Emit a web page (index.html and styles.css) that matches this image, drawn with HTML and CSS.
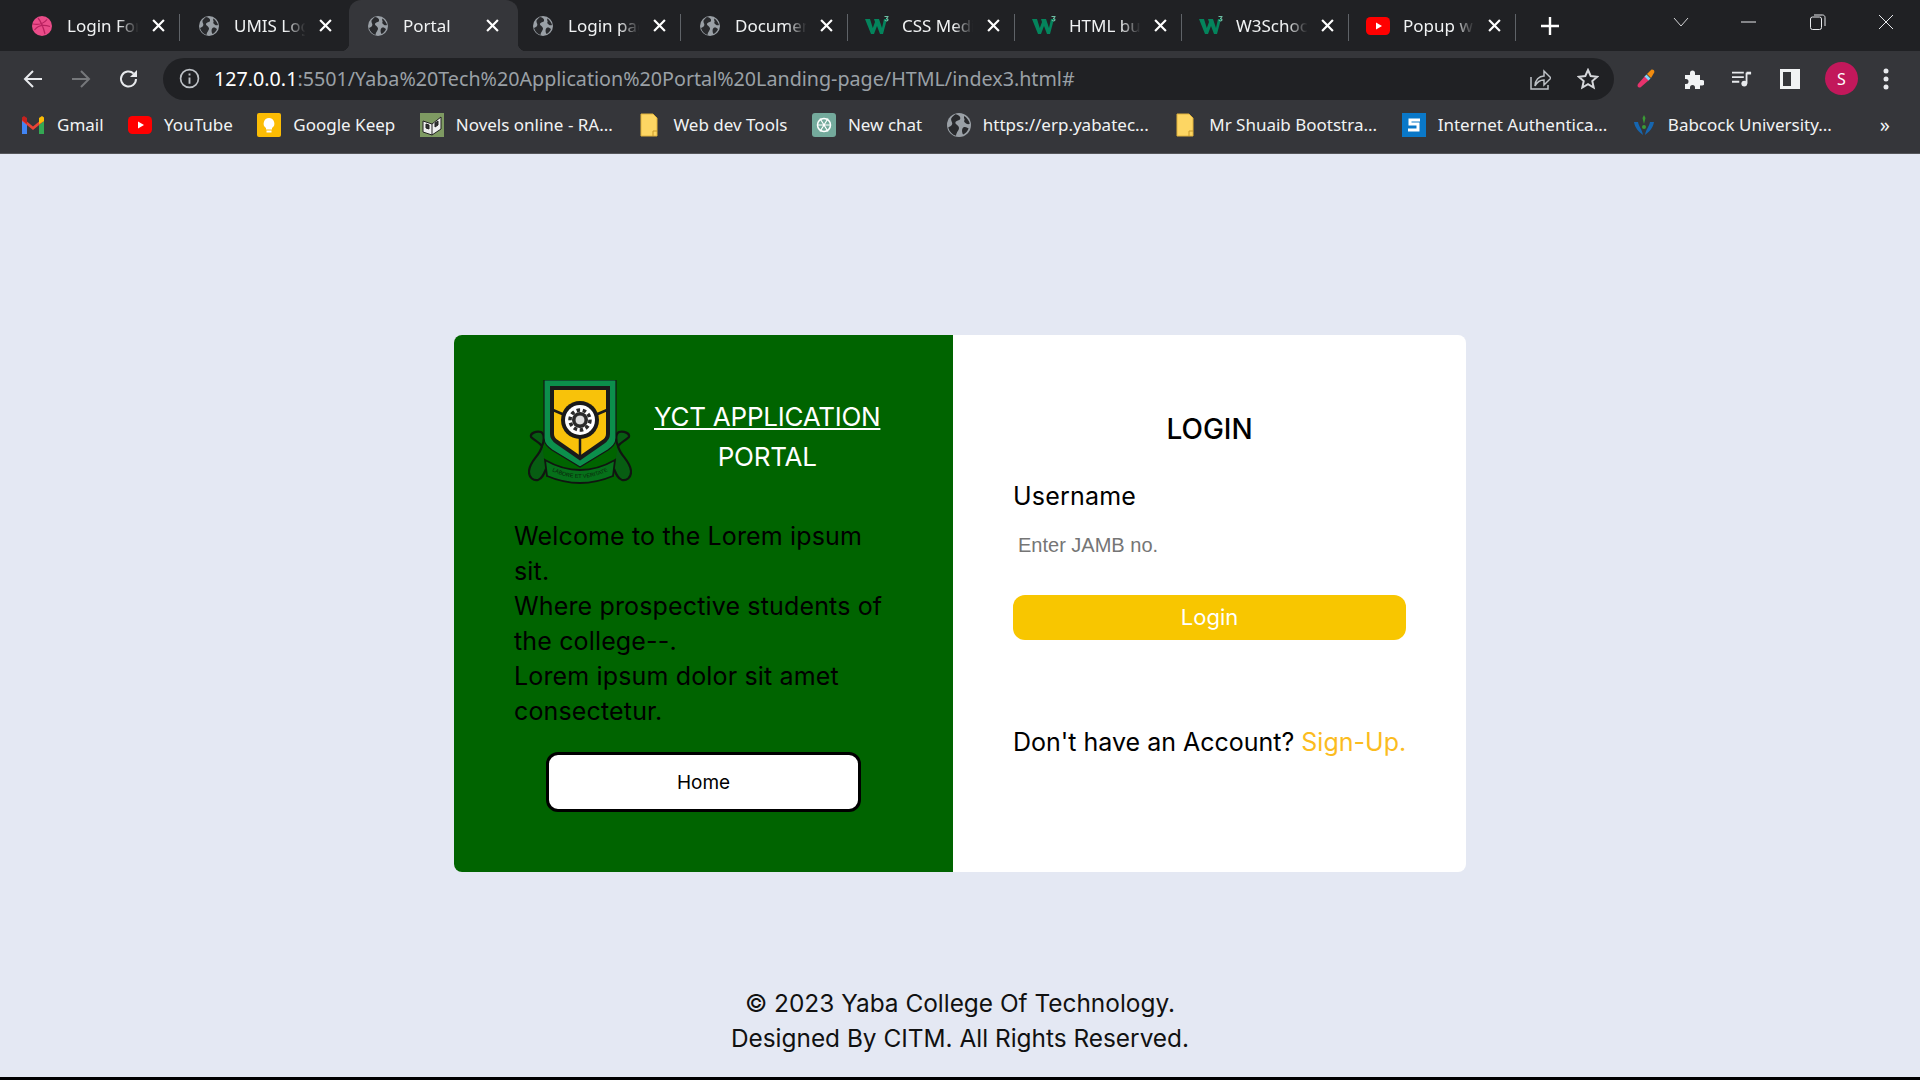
FILE: index.html
```html
<!DOCTYPE html>
<html lang="en">
<head>
  <meta charset="UTF-8">
  <meta name="viewport" content="width=device-width, initial-scale=1.0">
  <title>Portal</title>
  <link rel="stylesheet" href="styles.css">
</head>
<body>
<svg class="defs" width="0" height="0" aria-hidden="true">
  <symbol id="i-globe" viewBox="0 0 20 20">
    <circle cx="10" cy="10" r="10" fill="#9aa0a6"/>
    <path d="M7 1c3 .5 4.500 2 4 4-.5 1.500-3.500 1-4 3-.4 1.500 3 2.500 3 4.500 0 2-2 3-2.500 6.500-3-1-5.500-3.500-6.500-7 1.500-1 2.500-1 3.200-2.500C5 8 3 6.500 3.500 4.500 4.500 3 6 1.500 7 1z" fill="#292a2d"/>
    <path d="M14.500 2.500c2 1.500 4 4 4.500 6.500-2 1-3.500-.5-4.500-1.500-.8-1 .6-1.500 0-2.500-.3-.8-.6-1.700 0-2.500zM13.500 12c2-1 3 0 4.500 1-1 2.500-2.500 4-4.500 5-1-1.500-1.500-4.500 0-6z" fill="#292a2d"/>
  </symbol>
  <symbol id="i-w3" viewBox="0 0 24 20">
    <path d="M0 3h5l2.800 9L10 6l-1-3h5l3 9 2-9h3l-4 15h-3l-3-8-3 8H6z" fill="#04845c"/>
    <path d="M19.500 0h4v1l-1.300 1.200c.9.300 1.300.8 1.300 1.500 0 1-.8 1.700-2 1.700-.9 0-1.600-.3-2-.8l.6-.7c.3.300.8.500 1.300.5.500 0 .9-.2.900-.7 0-.5-.5-.7-1.300-.7v-.7l1.100-1.200h-2.600z" fill="#6fbfa4"/>
  </symbol>
  <symbol id="i-yt" viewBox="0 0 24 18">
    <rect width="24" height="18" rx="4.500" fill="#f00"/>
    <path d="M10 5.500l6 3.500-6 3.500z" fill="#fff"/>
  </symbol>
  <symbol id="i-folder" viewBox="0 0 18 24">
    <path d="M1 1h12l4 4v18H1z" fill="#fdd663" stroke="#e0b23c"/>
    <path d="M13 23v-5h4" fill="none" stroke="#c99a2c"/>
  </symbol>
  <symbol id="i-x" viewBox="0 0 12 12">
    <path d="M1 1l10 10M11 1L1 11" stroke="#fff" stroke-width="2" fill="none"/>
  </symbol>
</svg>

<div class="chrome">
  <div class="tabstrip">
    <div class="tab">
      <svg class="favicon" viewBox="0 0 20 20"><circle cx="10" cy="10" r="10" fill="#ea4c89"/><path d="M6 2c3 3.500 5 8 7 16M1 8c5 1 10 .5 14-4.500M2.500 14c3-4 8-6 15.500-3.500" fill="none" stroke="#b8215f" stroke-width="1.200"/></svg>
      <span class="tab-title">Login Form</span>
      <svg class="tab-close"><use href="#i-x"/></svg>
    </div>
    <div class="tab">
      <svg class="favicon"><use href="#i-globe"/></svg>
      <span class="tab-title">UMIS Login</span>
      <svg class="tab-close"><use href="#i-x"/></svg>
    </div>
    <div class="tab active">
      <svg class="favicon"><use href="#i-globe"/></svg>
      <span class="tab-title">Portal</span>
      <svg class="tab-close"><use href="#i-x"/></svg>
    </div>
    <div class="tab">
      <svg class="favicon"><use href="#i-globe"/></svg>
      <span class="tab-title">Login page</span>
      <svg class="tab-close"><use href="#i-x"/></svg>
    </div>
    <div class="tab">
      <svg class="favicon"><use href="#i-globe"/></svg>
      <span class="tab-title">Document</span>
      <svg class="tab-close"><use href="#i-x"/></svg>
    </div>
    <div class="tab">
      <svg class="favicon wide"><use href="#i-w3"/></svg>
      <span class="tab-title">CSS Media</span>
      <svg class="tab-close"><use href="#i-x"/></svg>
    </div>
    <div class="tab">
      <svg class="favicon wide"><use href="#i-w3"/></svg>
      <span class="tab-title">HTML button</span>
      <svg class="tab-close"><use href="#i-x"/></svg>
    </div>
    <div class="tab">
      <svg class="favicon wide"><use href="#i-w3"/></svg>
      <span class="tab-title">W3Schools</span>
      <svg class="tab-close"><use href="#i-x"/></svg>
    </div>
    <div class="tab">
      <svg class="favicon wide"><use href="#i-yt"/></svg>
      <span class="tab-title">Popup with</span>
      <svg class="tab-close"><use href="#i-x"/></svg>
    </div>
    <svg class="new-tab" viewBox="0 0 18 18"><path d="M9 0v18M0 9h18" stroke="#fff" stroke-width="2.400"/></svg>
    <div class="window-controls">
      <svg viewBox="0 0 16 10" class="win-chevron"><path d="M1 1l7 8 7-8" fill="none" stroke="#d5d6d8" stroke-width="1"/></svg>
      <svg viewBox="0 0 16 16" class="win-btn"><path d="M0 8h15" stroke="#e8eaed" stroke-width="1"/></svg>
      <svg viewBox="0 0 16 16" class="win-btn"><rect x=".5" y="3" width="11" height="12.500" rx="2" fill="none" stroke="#e8eaed"/><path d="M4 1h8.500c1.500 0 2.500 1 2.500 2.500V12" fill="none" stroke="#e8eaed"/></svg>
      <svg viewBox="0 0 16 16" class="win-btn"><path d="M1 1l14 14M15 1L1 15" stroke="#e8eaed" stroke-width="1"/></svg>
    </div>
  </div>

  <div class="toolbar">
    <svg class="tool-icon" viewBox="0 0 20 20"><path d="M19 10H3M10 2l-8 8 8 8" fill="none" stroke="#e8eaed" stroke-width="2"/></svg>
    <svg class="tool-icon" viewBox="0 0 20 20"><path d="M1 10h16M10 2l8 8-8 8" fill="none" stroke="#76787b" stroke-width="2"/></svg>
    <svg class="tool-icon" viewBox="0 0 20 20"><path d="M17 10a7.500 7.500 0 1 1-2.300-5.400" fill="none" stroke="#e8eaed" stroke-width="2"/><path d="M18 1v7h-7z" fill="#e8eaed"/></svg>
    <div class="omnibox">
      <svg class="info" viewBox="0 0 20 20"><circle cx="10" cy="10" r="8.500" fill="none" stroke="#bdc1c6" stroke-width="1.600"/><path d="M10 9v6M10 5.200v2" stroke="#bdc1c6" stroke-width="1.800"/></svg>
      <span class="url"><span class="host">127.0.0.1</span>:5501/Yaba%20Tech%20Application%20Portal%20Landing-page/HTML/index3.html#</span>
      <svg class="omni-icon share" viewBox="0 0 22 22"><path d="M2 9v12h17v-4" fill="none" stroke="#bdc1c6" stroke-width="1.500"/><path d="M6 18c0-6 4-10 9-10V3l7 7-7 7v-5c-4 0-7 2-9 6z" fill="none" stroke="#bdc1c6" stroke-width="1.500"/></svg>
      <svg class="omni-icon" viewBox="0 0 22 22"><path d="M11 2l2.700 6 6.500.7-4.900 4.400 1.400 6.400L11 16.200 5.300 19.500l1.400-6.400L1.800 8.700 8.300 8z" fill="none" stroke="#d5d7da" stroke-width="2"/></svg>
    </div>
    <div class="tool-right">
      <svg class="tool-icon" viewBox="0 0 20 20"><path d="M9 7l4 4-8 7c-2 1.500-4.500-.5-3-3z" fill="#e8336d"/><path d="M8.500 7.500l2-2 4 4-2 2z" fill="#81d4fa"/><path d="M11 5l4-4c1.500-1.200 4 .5 3.200 2.500L15 9z" fill="#f28c0f"/></svg>
      <svg class="tool-icon" viewBox="0 0 20 20"><path d="M1 6h5V4a2.500 2.500 0 0 1 5 0v2h5v5h2a2.700 2.700 0 0 1 0 5.500h-2V20h-5v-1.500a2.500 2.500 0 0 0-5 0V20H1v-5h1a2.500 2.500 0 0 0 0-5H1z" fill="#f1f3f4"/></svg>
      <svg class="tool-icon" viewBox="0 0 22 20"><path d="M0 3h13M0 8h13M0 13h8" stroke="#e8eaed" stroke-width="2"/><path d="M16 3v12" stroke="#e8eaed" stroke-width="2"/><path d="M16 2h5v3h-5z" fill="#e8eaed"/><circle cx="13.500" cy="15" r="3.200" fill="#e8eaed"/></svg>
      <svg class="tool-icon" viewBox="0 0 20 20"><rect x="0" y="0" width="20" height="20" fill="#f1f3f4"/><rect x="3" y="3" width="8" height="14" fill="#35363a"/></svg>
      <span class="avatar">S</span>
      <svg class="kebab" viewBox="0 0 6 22"><circle cx="3" cy="3" r="2.500" fill="#e8eaed"/><circle cx="3" cy="11" r="2.500" fill="#e8eaed"/><circle cx="3" cy="19" r="2.500" fill="#e8eaed"/></svg>
    </div>
  </div>

  <div class="bookmarks">
    <span class="bookmark">
      <svg class="bm-icon" viewBox="0 0 24 20"><path d="M1 4v15h5V9z" fill="#4285f4"/><path d="M18 9v10h5V4z" fill="#34a853"/><path d="M1 2.500l11 9 11-9V6L12 15 1 6z" fill="#ea4335"/><path d="M18 3l3-2 2 1.500V6l-5 3z" fill="#fbbc04"/><path d="M1 2.500L3 1l3 2v6L1 5z" fill="#c5221f"/></svg>
      Gmail
    </span>
    <span class="bookmark">
      <svg class="bm-icon"><use href="#i-yt"/></svg>
      YouTube
    </span>
    <span class="bookmark">
      <svg class="bm-icon" viewBox="0 0 24 24"><rect width="24" height="24" rx="2" fill="#fbbc04"/><path d="M12 5a5.500 5.500 0 0 0-3 10v1.500h6V15a5.500 5.500 0 0 0-3-10z" fill="#fff"/><rect x="9.500" y="17.500" width="5" height="2" fill="#fff"/></svg>
      Google Keep
    </span>
    <span class="bookmark">
      <svg class="bm-icon" viewBox="0 0 24 24"><rect width="24" height="24" fill="#7e9a62"/><path d="M3 8l9 3 9-7v12l-9 6-9-3z" fill="#eee" stroke="#222"/><path d="M12 11v11M6 11l3 1v4l-3-1zM15 10l3-2v4l-3 2z" fill="#333" stroke="#222"/></svg>
      Novels online - RA...
    </span>
    <span class="bookmark">
      <svg class="bm-icon"><use href="#i-folder"/></svg>
      Web dev Tools
    </span>
    <span class="bookmark">
      <svg class="bm-icon" viewBox="0 0 24 24"><rect width="24" height="24" rx="3" fill="#74aa9c"/><circle cx="12" cy="12" r="6.500" fill="none" stroke="#fff" stroke-width="1.500"/><path d="M8 5.500l8 13M16 5.500l-8 13M5.500 12h13" stroke="#fff" stroke-width="1.200"/></svg>
      New chat
    </span>
    <span class="bookmark">
      <svg class="bm-icon"><use href="#i-globe"/></svg>
      https://erp.yabatec...
    </span>
    <span class="bookmark">
      <svg class="bm-icon"><use href="#i-folder"/></svg>
      Mr Shuaib Bootstra...
    </span>
    <span class="bookmark">
      <svg class="bm-icon" viewBox="0 0 24 24"><rect width="24" height="24" fill="#0a78c8"/><path d="M18 7H8v4h8v6H6" fill="none" stroke="#fff" stroke-width="3"/></svg>
      Internet Authentica...
    </span>
    <span class="bookmark">
      <svg class="bm-icon" viewBox="0 0 24 24"><path d="M12 2l1.500 3L12 11l-1.500-6z" fill="#3a9b35"/><path d="M2 9c1 6 5 10 9 13-1-6-4-8-5-13zM22 9c-1 6-5 10-9 13 1-6 4-8 5-13z" fill="#1666b0"/><circle cx="12" cy="14" r="2" fill="#3a9b35"/></svg>
      Babcock University...
    </span>
    <span class="more">»</span>
  </div>
</div>

<main class="page">
  <div class="card">
    <section class="welcome">
      <div class="brand">
        <svg class="crest" viewBox="0 0 104 104" role="img" aria-label="Yaba College of Technology crest">
          <g class="scroll">
            <path d="M14 66C12 76 2 80 1 91c-.5 7 5 10 9 9 4-1 6-6 8-11" />
            <path d="M3 57c-1-4 5-6 10-5 4 2 3 10 1 14-3-4-7-5-11-9z" />
          </g>
          <g class="scroll">
            <path d="M90 66c2 10 12 14 13 25 .5 7-5 10-9 9-4-1-6-6-8-11" />
            <path d="M101 57c1-4-5-6-10-5-4 2-3 10-1 14 3-4 7-5 11-9z" />
          </g>
          <path class="ribbon" d="M17 80Q52 100 87 80L85 96Q52 110 19 96z"/>
          <path id="motto-arc" fill="none" d="M22 90Q52 106 82 90"/>
          <text class="motto"><textPath href="#motto-arc" startOffset="50%">LABORE ET VERITATE</textPath></text>
          <path d="M16 0H88V58C88 64 84 67 80 70L52 87 24 70C20 67 16 64 16 58z" fill="#0c8f4c" stroke="#141414" stroke-width="1.200"/>
          <path d="M24 8H80V54C80 58 78 60 75 62L52 78 29 62C26 60 24 58 24 54z" fill="#f8c20a" stroke="#1a1a1a" stroke-width="4"/>
          <path d="M52 50V78M25 30l14 6M79 30l-14 6" stroke="#1a1a1a" stroke-width="2.500"/>
          <circle cx="52" cy="40" r="19" fill="#1a1a1a"/>
          <circle cx="52" cy="40" r="15" fill="#fff"/>
          <circle cx="52" cy="40" r="10" fill="none" stroke="#2a2a2a" stroke-width="3.500" stroke-dasharray="3.500 2.700"/>
          <circle cx="52" cy="40" r="8" fill="#2a2a2a"/>
          <circle cx="52" cy="40" r="5" fill="#ddd" stroke="#2a2a2a" stroke-width="1"/>
        </svg>
        <h1 class="brand-title"><a href="#" class="brand-link">YCT APPLICATION</a><br>PORTAL</h1>
      </div>
      <p class="intro">Welcome to the Lorem ipsum<br>sit.<br>Where prospective students of<br>the college--.<br>Lorem ipsum dolor sit amet<br>consectetur.</p>
      <button class="home-btn" type="button">Home</button>
    </section>

    <section class="login">
      <h2 class="login-title">LOGIN</h2>
      <form class="login-form">
        <label class="field-label" for="jamb">Username</label>
        <input class="field-input" id="jamb" type="text" placeholder="Enter JAMB no.">
        <button class="login-btn" type="button">Login</button>
      </form>
      <p class="signup">Don't have an Account? <a href="#" class="signup-link">Sign-Up.</a></p>
    </section>
  </div>

  <footer class="footer">
    <p>© 2023 Yaba College Of Technology.</p>
    <p>Designed By CITM. All Rights Reserved.</p>
  </footer>
</main>
</body>
</html>
```

FILE: styles.css
```css
* {
  box-sizing: border-box;
}

html, body {
  height: 100%;
}

body {
  margin: 0;
  height: 1080px;
  display: flex;
  flex-direction: column;
  overflow: hidden;
  font-family: Inter, "Liberation Sans", sans-serif;
  background: #e4e8f3;
  color: #000;
  border-bottom: 3px solid #000;
}

.defs {
  position: absolute;
}

/* browser chrome */
.chrome {
  flex-shrink: 0;
  font-family: "Noto Sans", "Open Sans", sans-serif;
  color: #e8eaed;
  background: #35363a;
  border-bottom: 1px solid #55565a;
}

.tabstrip {
  height: 51px;
  display: flex;
  align-items: center;
  padding-left: 13px;
  background: #202124;
}

.tab {
  width: 167px;
  height: 51px;
  flex-shrink: 0;
  display: flex;
  align-items: center;
  padding: 0 15px 0 19px;
  position: relative;
  font-size: 17px;
  color: #f1f3f4;
}

.tab::after {
  content: "";
  position: absolute;
  right: 0;
  top: 14px;
  height: 27px;
  width: 1px;
  background: #5f6368;
}

.tab:has(+ .active)::after {
  display: none;
}

.tab.active {
  width: 169px;
  margin: 0 -4px 0 2px;
  padding-right: 19px;
  background: #35363a;
  border-radius: 12px 12px 0 0;
}

/* the little curves at the foot of the open tab */
.tab.active::before,
.tab.active::after {
  content: "";
  position: absolute;
  top: auto;
  bottom: 0;
  width: 8px;
  height: 8px;
}

.tab.active::before {
  left: -8px;
  background: radial-gradient(circle at 0 0, transparent 8px, #35363a 8.500px);
}

.tab.active::after {
  right: -8px;
  background: radial-gradient(circle at 100% 0, transparent 8px, #35363a 8.500px);
}

.favicon {
  width: 20px;
  height: 20px;
  flex-shrink: 0;
  margin-right: 15px;
}

.favicon.wide {
  width: 24px;
  margin-left: -2px;
  margin-right: 13px;
}

.tab-title {
  flex-grow: 1;
  min-width: 0;
  overflow: hidden;
  white-space: nowrap;
  -webkit-mask-image: linear-gradient(to right, #000 70%, transparent 98%);
  mask-image: linear-gradient(to right, #000 70%, transparent 98%);
}

.tab-close {
  width: 13px;
  height: 13px;
  flex-shrink: 0;
  margin-left: 12px;
}

.new-tab {
  width: 18px;
  height: 18px;
  margin-left: 25px;
}

.window-controls {
  margin-left: auto;
  display: flex;
  align-items: center;
  align-self: flex-start;
  height: 43px;
  padding-right: 26px;
}

.win-chevron {
  width: 16px;
  height: 10px;
}

.win-btn {
  width: 16px;
  height: 16px;
  margin-left: 52.500px;
}

.toolbar {
  height: 56px;
  display: flex;
  align-items: center;
  padding: 0 14px 1px 23px;
}

.tool-icon {
  width: 20px;
  height: 20px;
  margin-right: 28px;
  flex-shrink: 0;
}

.omnibox {
  width: 1451px;
  height: 42px;
  margin-left: -4px;
  flex-shrink: 0;
  display: flex;
  align-items: center;
  background: #202124;
  border-radius: 21px;
  padding: 0 15px 0 16px;
  font-size: 19.700px;
}

.info {
  width: 21px;
  height: 21px;
  margin-right: 14px;
  flex-shrink: 0;
}

.url {
  flex-grow: 1;
  color: #9aa0a6;
  white-space: nowrap;
  overflow: hidden;
}

.host {
  color: #fff;
}

.omni-icon {
  width: 22px;
  height: 22px;
  margin-left: 26px;
  flex-shrink: 0;
}

.tool-right {
  display: flex;
  align-items: center;
  margin-left: 22px;
}

.avatar {
  width: 33px;
  height: 33px;
  border-radius: 50%;
  background: #c2185b;
  color: #fff;
  font-size: 16px;
  display: flex;
  align-items: center;
  justify-content: center;
  margin-left: -3px;
  margin-right: 25px;
}

.kebab {
  width: 6px;
  height: 22px;
}

.bookmarks {
  height: 46px;
  display: flex;
  align-items: center;
  padding: 0 30px 11px 21px;
  gap: 24.500px;
  font-size: 17px;
  color: #f1f3f4;
  white-space: nowrap;
}

.bookmark {
  display: flex;
  align-items: center;
  gap: 12px;
}

.bm-icon {
  width: 24px;
  height: 24px;
  flex-shrink: 0;
}

.more {
  margin-left: auto;
  font-size: 20px;
}

/* page */
.page {
  flex-grow: 1;
  display: flex;
  flex-direction: column;
  align-items: center;
}

.card {
  width: 1012px;
  height: 537px;
  margin-top: 181px;
  display: grid;
  grid-template-columns: 499px 513px;
  background: #fff;
  border-radius: 8px;
  overflow: hidden;
}

.welcome {
  background: #006400;
  padding: 45px 0 0 60px;
}

.brand {
  display: flex;
  align-items: center;
  margin-left: 14px;
  gap: 22px;
}

.crest {
  width: 104px;
  height: 104px;
  flex-shrink: 0;
}

.scroll path {
  fill: #075d12;
  stroke: #101510;
  stroke-width: 2.200;
}

.ribbon {
  fill: #06701a;
  stroke: #101510;
  stroke-width: 1.800;
}

.motto {
  font-family: "Liberation Sans", sans-serif;
  font-size: 5.500px;
  text-anchor: middle;
  fill: #0b1f0b;
}

.brand-title {
  margin: 0;
  padding-top: 10px;
  font-size: 26px;
  letter-spacing: -0.250px;
  font-weight: 400;
  line-height: 40px;
  color: #fff;
  text-align: center;
}

.brand-link {
  color: #fff;
}

.intro {
  margin: 35px 0 0;
  font-size: 25px;
  letter-spacing: 0.150px;
  line-height: 35px;
  color: #000;
}

.home-btn {
  display: block;
  width: 315px;
  height: 60px;
  margin: 23px 0 0 32px;
  background: #fff;
  border: 3px solid #000;
  border-radius: 12px;
  font-family: Inter, sans-serif;
  font-size: 19px;
  color: #000;
}

.login {
  padding: 74px 60px 0;
}

.login-title {
  margin: 0;
  font-size: 28px;
  line-height: 40px;
  font-weight: 500;
  text-align: center;
  color: #000;
}

.login-form {
  margin-top: 29px;
  display: flex;
  flex-direction: column;
}

.field-label {
  font-size: 25px;
  letter-spacing: 0.200px;
  line-height: 36px;
}

.field-input {
  height: 44px;
  margin-top: 9px;
  padding: 0 5px;
  border: none;
  outline: none;
  font-family: "Liberation Sans", sans-serif;
  font-size: 20px;
}

.login-btn {
  height: 45px;
  margin-top: 28px;
  padding-bottom: 3px;
  border: none;
  border-radius: 12px;
  background: #f8c600;
  color: #fff;
  font-family: Inter, sans-serif;
  font-size: 22px;
}

.signup {
  margin: 84px 0 0;
  font-size: 25px;
  line-height: 36px;
  white-space: nowrap;
}

.signup-link {
  color: #fbbc1f;
  text-decoration: none;
}

.footer {
  margin-top: 114px;
  text-align: center;
  font-size: 24.400px;
  line-height: 35px;
  color: #111;
}

.footer p {
  margin: 0;
}
```
